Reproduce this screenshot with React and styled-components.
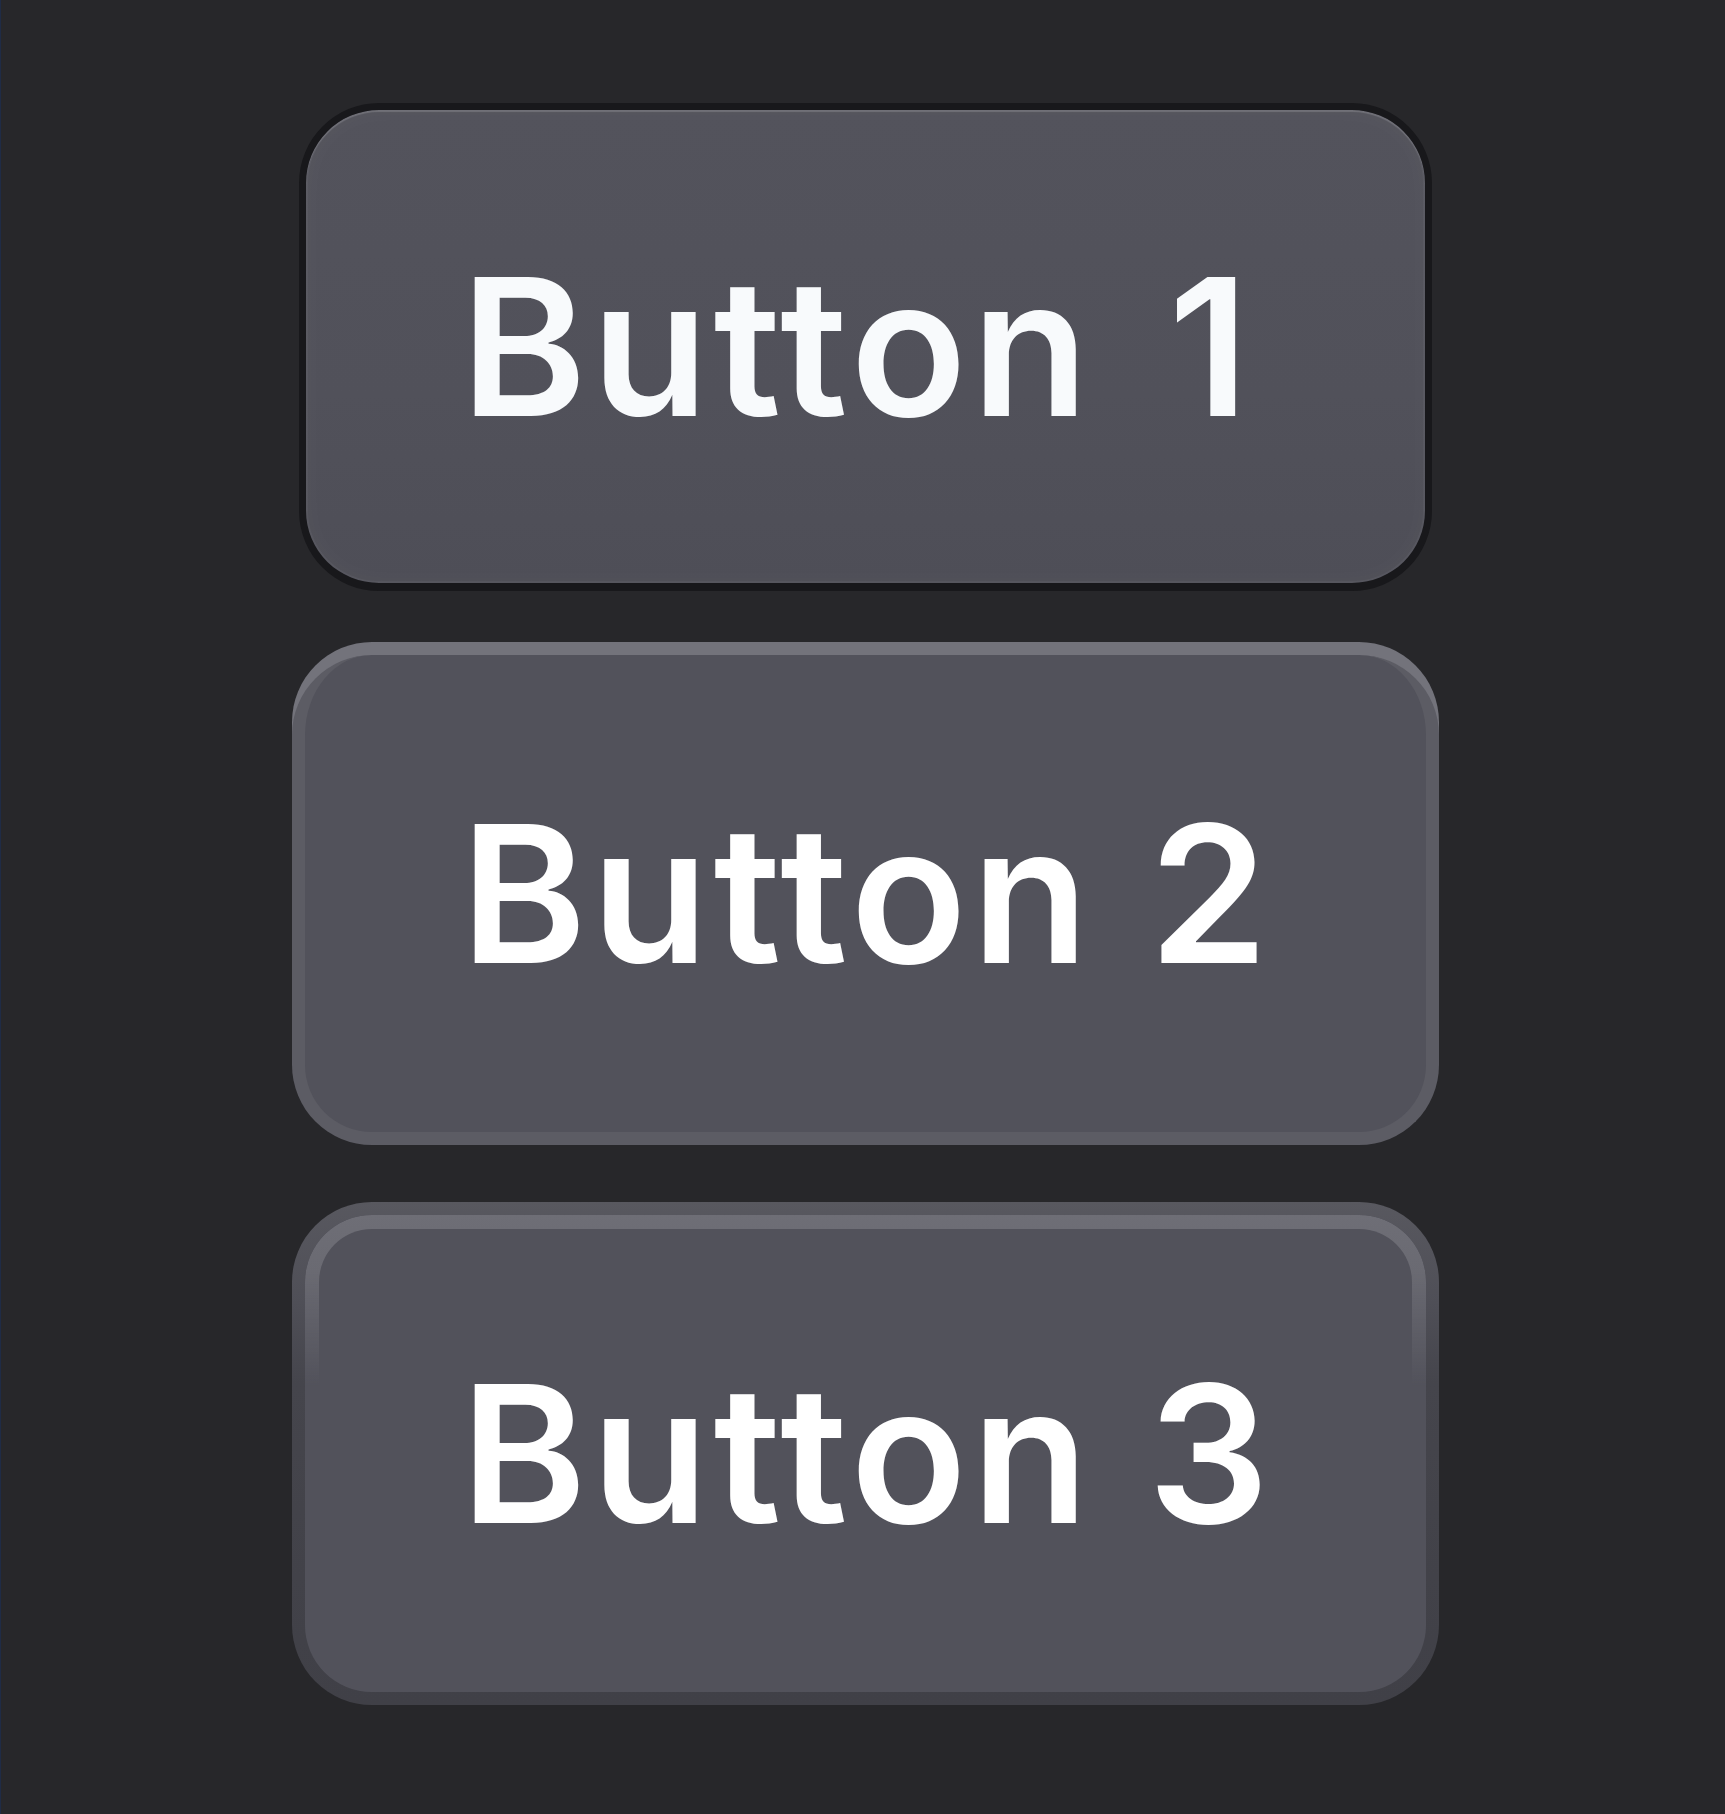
import styled, { createGlobalStyle, css } from 'styled-components';

const GlobalStyle = createGlobalStyle`
  html, body {
    margin: 0;
    padding: 0;
    background: #27272a;
  }
  body {
    font-family: Inter, "Noto Sans", sans-serif;
  }
`;

// the whole column of demo buttons
const Page = styled.main`
  box-sizing: border-box;
  min-height: 1814px;
  padding: 103px 0 0 292px;
  box-shadow: inset 1px 0 0 #1f2b45;
`;

const Stack = styled.div`
  display: flex;
  flex-direction: column;
  align-items: center;
  width: 1147px;
`;

const Label = styled.span`
  position: relative;
  z-index: 1;
  margin-right: -5px;
`;

// digit keeps a tabular-width cell but the plain glyph
const Digit = styled.span`
  display: inline-grid;
  justify-items: center;

  & > span,
  &::after {
    grid-area: 1 / 1;
  }
  &::after {
    content: '0';
    visibility: hidden;
    font-variant-numeric: tabular-nums;
  }
`;

// sunken: dark ring, soft inner light
const sunken = css`
  width: 1133px;
  height: 488px;
  border: 7px solid #18181b;
  border-bottom-width: 8px;
  border-radius: 80px;
  color: #f8fafc;
  background: linear-gradient(180deg, #53535c 0%, #51515a 60%, #4e4e57 100%);
  box-shadow:
    inset 0 2px 1px rgba(255, 255, 255, 0.13),
    inset 0 0 0 2px rgba(255, 255, 255, 0.04),
    inset 0 0 30px rgba(255, 255, 255, 0.03);
`;

// raised: light lip on top, thick side wall
const raised = css`
  margin-top: 64px;
  width: 1147px;
  height: 490px;
  border: 13px solid #5c5c64;
  border-top: 0;
  border-radius: 80px;
  color: #ffffff;
  background: #52525b;
  box-shadow: 0 -13px 0 #73737b;
`;

// bevel: gradient wall plus a light inner ring fading down
const bevel = css`
  margin-top: 57px;
  width: 1147px;
  height: 503px;
  border: 13px solid transparent;
  border-radius: 80px;
  color: #ffffff;
  background:
    linear-gradient(#52525b, #52525b) padding-box,
    linear-gradient(180deg, #58585f 0%, #4f4f57 20%, #45454c 36%, #404047 100%) border-box;

  &::before {
    content: '';
    position: absolute;
    inset: 0;
    padding: 14px;
    border-radius: 67px;
    background: linear-gradient(180deg, #6e6e76 0%, #6a6a72 12%, rgba(82, 82, 91, 0) 36%);
    -webkit-mask: linear-gradient(#000 0 0) content-box, linear-gradient(#000 0 0);
    -webkit-mask-composite: xor;
    mask-composite: exclude;
  }
`;

const variants = { sunken, raised, bevel };

const Button = styled.button`
  position: relative;
  box-sizing: border-box;
  display: flex;
  align-items: center;
  justify-content: center;
  padding: 0;
  font-family: Inter, "Noto Sans", sans-serif;
  font-weight: 600;
  font-size: 191px;
  line-height: 1;
  letter-spacing: 5px;
  cursor: pointer;
  ${(p) => variants[p.$variant]}
`;

const buttons = [
  { variant: 'sunken', n: '1' },
  { variant: 'raised', n: '2' },
  { variant: 'bevel', n: '3' },
];

export default function App() {
  return (
    <>
      <GlobalStyle />
      <Page>
        <Stack>
          {buttons.map((b) => (
            <Button key={b.n} $variant={b.variant}>
              <Label>
                Button{' '}
                <Digit>
                  <span>{b.n}</span>
                </Digit>
              </Label>
            </Button>
          ))}
        </Stack>
      </Page>
    </>
  );
}
